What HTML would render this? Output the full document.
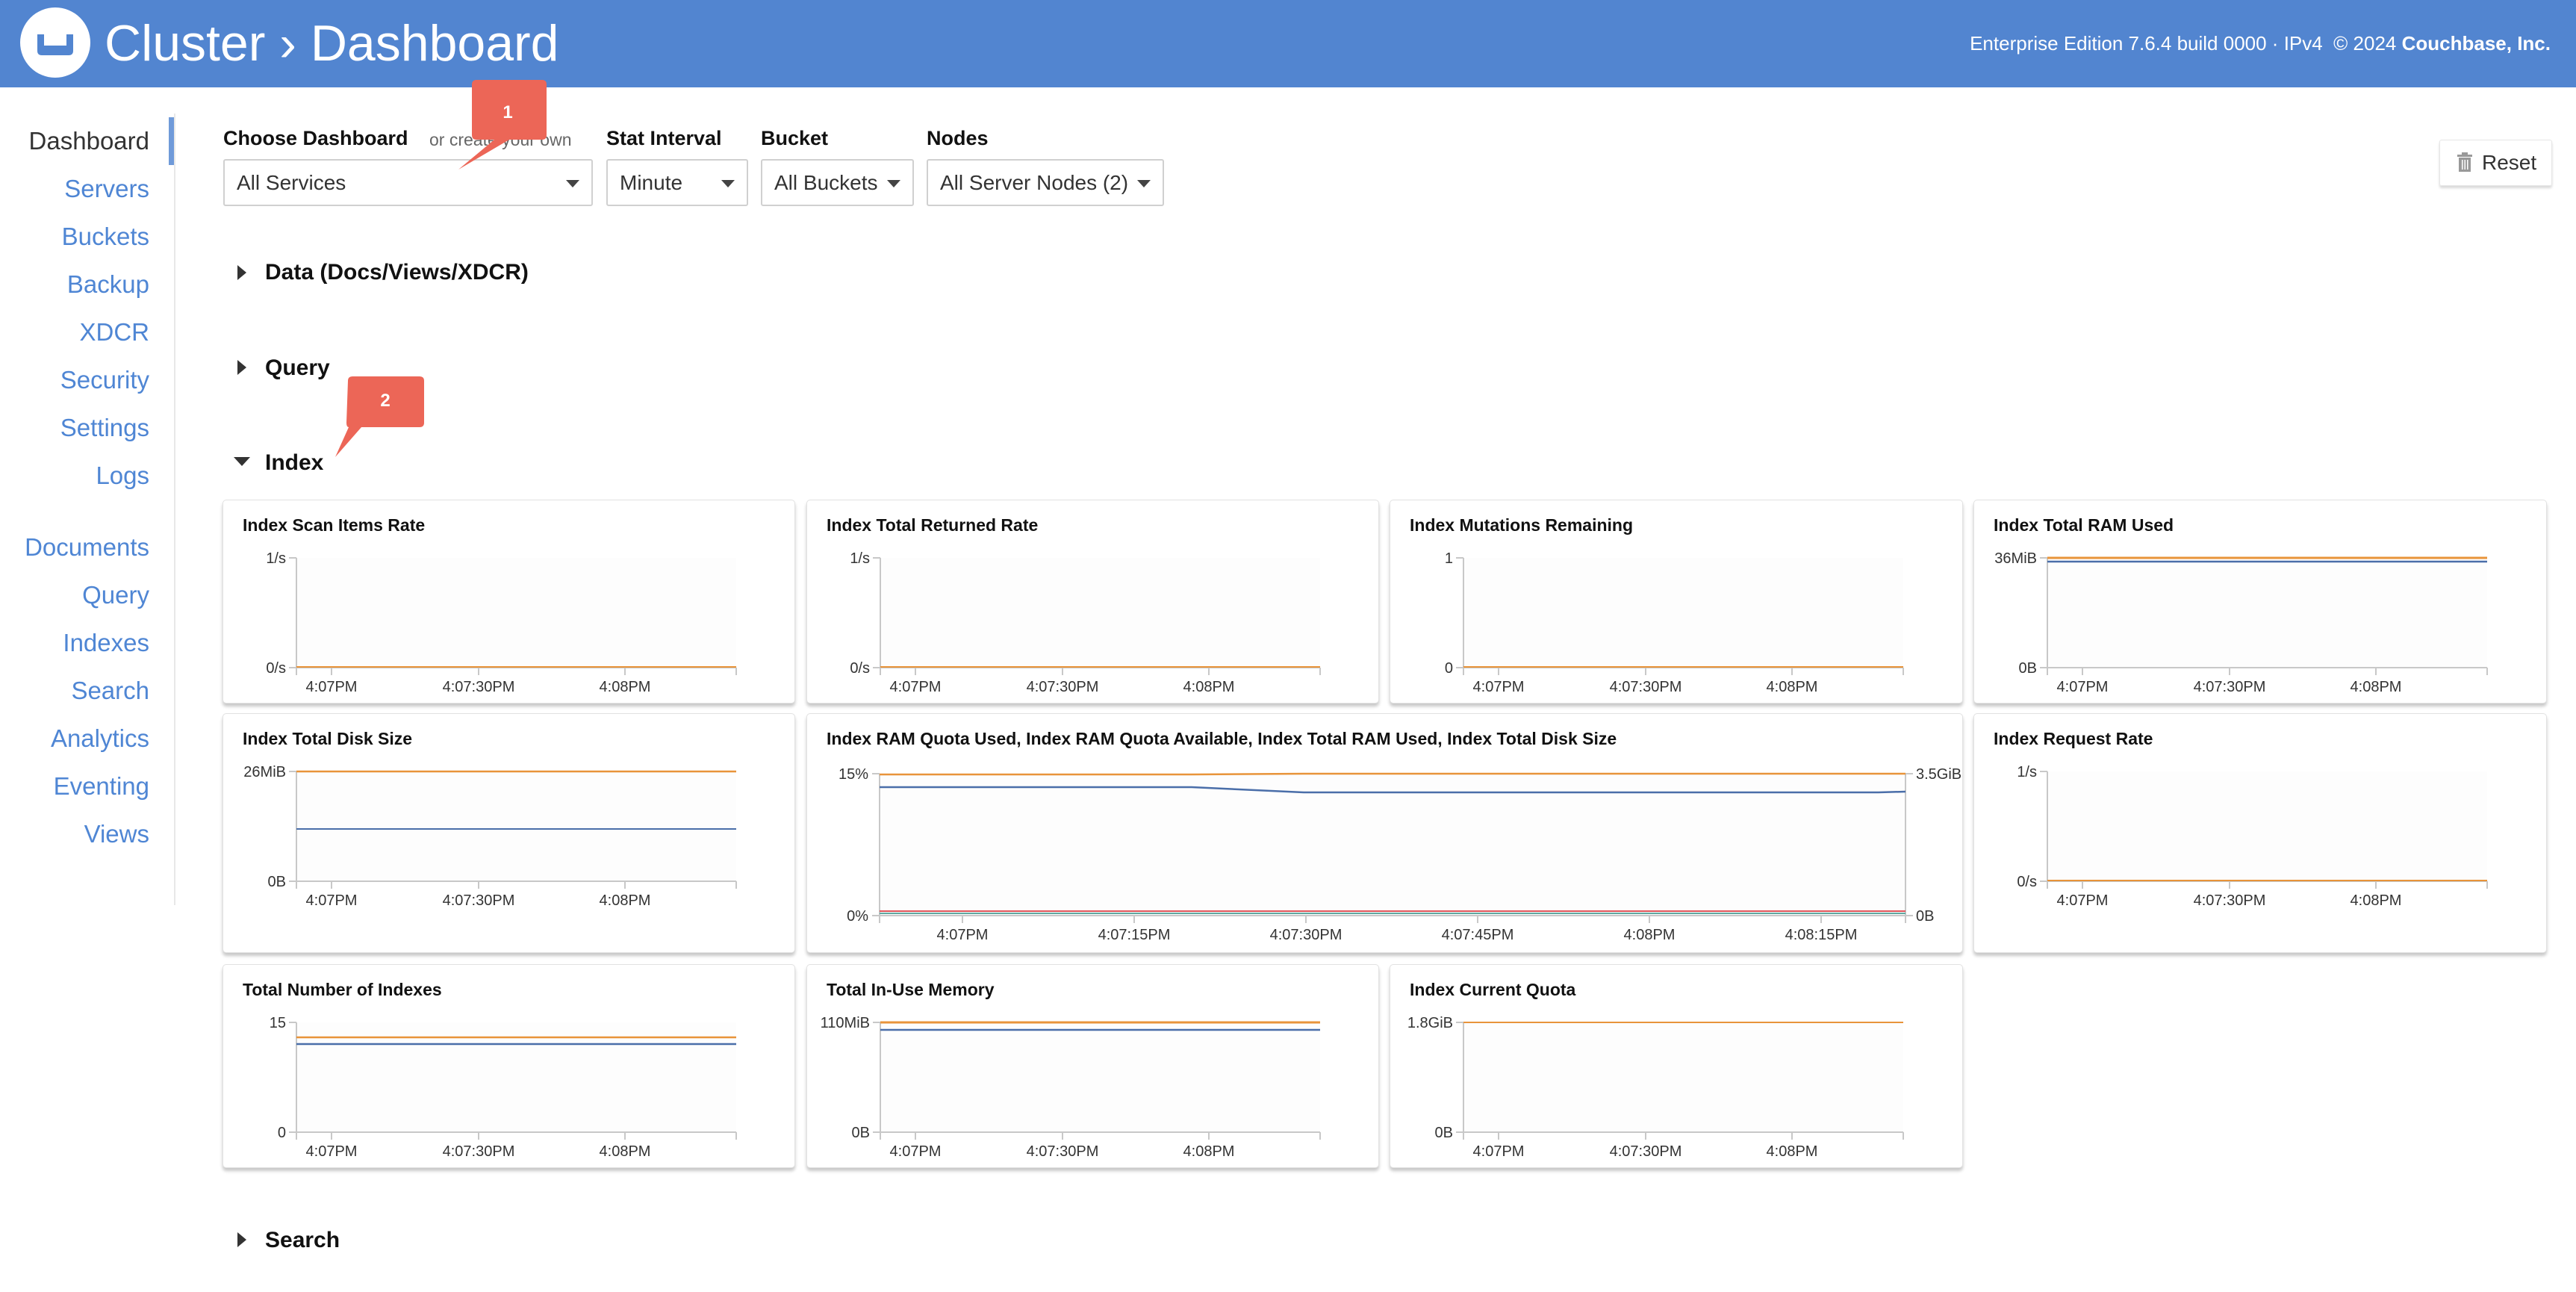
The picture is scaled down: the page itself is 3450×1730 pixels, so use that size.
<!DOCTYPE html>
<html><head><meta charset="utf-8"><style>
*{margin:0;padding:0;box-sizing:border-box}
body{width:3450px;height:1730px;background:#fff;position:relative;overflow:hidden;font-family:"Liberation Sans",sans-serif;color:#111}
.a{position:absolute;white-space:nowrap}
.hdr{left:0;top:0;width:3450px;height:117px;background:#5285d0}
.nav{right:3250px;font-size:33px;color:#4f86d4;height:50px;line-height:50px;text-align:right}
.lbl{font-size:27px;font-weight:bold;color:#111;top:167px;line-height:36px}
.sel{top:213px;height:63px;border:2px solid #d0d0d0;border-radius:3px;font-size:28px;color:#333;line-height:59px;padding-left:16px;background:#fff}
.sel:after{content:"";position:absolute;right:16px;top:26px;border-left:9px solid transparent;border-right:9px solid transparent;border-top:10px solid #444}
.sec{font-size:30px;font-weight:bold;color:#111;line-height:40px}
.tri{width:0;height:0;border-top:10px solid transparent;border-bottom:10px solid transparent;border-left:12px solid #333}
.card{position:absolute;background:#fff;border:1px solid #e2e2e2;border-radius:5px;box-shadow:0 4px 4px rgba(0,0,0,.22)}
.card svg{position:absolute;left:0;top:0}
svg text{font-family:"Liberation Sans",sans-serif}
.t{font-size:23px;font-weight:bold;fill:#111}
.ax{font-size:20px;fill:#333}
</style></head><body>
<div class="a hdr"></div>
<svg class="a" style="left:26px;top:9px" width="96" height="96"><circle cx="48" cy="48" r="47" fill="#fff"/><path d="M24 37 v22 q0 6 6 6 h36 q6 0 6-6 v-22 h-9 v15 h-30 v-15z" fill="#5285d0"/></svg>
<div class="a" style="left:140px;top:16px;font-size:68px;color:#fff;line-height:84px">Cluster › Dashboard</div>
<div class="a" style="right:34px;top:40px;font-size:26px;color:#fff;line-height:36px">Enterprise Edition 7.6.4 build 0000 · IPv4 &nbsp;© 2024 <b>Couchbase, Inc.</b></div>

<div class="a" style="left:233px;top:152px;width:2px;height:1060px;background:#e8e8e8"></div>
<div class="a" style="left:226px;top:157px;width:7px;height:64px;background:#6f9ad9"></div>
<div class="a nav" style="top:164px;color:#333">Dashboard</div>
<div class="a nav" style="top:228px">Servers</div>
<div class="a nav" style="top:292px">Buckets</div>
<div class="a nav" style="top:356px">Backup</div>
<div class="a nav" style="top:420px">XDCR</div>
<div class="a nav" style="top:484px">Security</div>
<div class="a nav" style="top:548px">Settings</div>
<div class="a nav" style="top:612px">Logs</div>
<div class="a nav" style="top:708px">Documents</div>
<div class="a nav" style="top:772px">Query</div>
<div class="a nav" style="top:836px">Indexes</div>
<div class="a nav" style="top:900px">Search</div>
<div class="a nav" style="top:964px">Analytics</div>
<div class="a nav" style="top:1028px">Eventing</div>
<div class="a nav" style="top:1092px">Views</div>

<div class="a lbl" style="left:299px">Choose Dashboard</div>
<div class="a" style="left:575px;top:170px;font-size:23px;color:#666;line-height:34px">or create your own</div>
<div class="a lbl" style="left:812px">Stat Interval</div>
<div class="a lbl" style="left:1019px">Bucket</div>
<div class="a lbl" style="left:1241px">Nodes</div>
<div class="a sel" style="left:299px;width:495px">All Services</div>
<div class="a sel" style="left:812px;width:190px">Minute</div>
<div class="a sel" style="left:1019px;width:205px">All Buckets</div>
<div class="a sel" style="left:1241px;width:318px">All Server Nodes (2)</div>

<div class="a" style="left:3267px;top:187px;width:151px;height:62px;border:1px solid #e6e6e6;border-radius:3px;box-shadow:0 3px 3px rgba(0,0,0,.15);font-size:28px;color:#333;line-height:60px;padding-left:56px">Reset</div>
<svg class="a" style="left:3291px;top:204px" width="20" height="26"><rect x="0" y="3" width="20" height="3" fill="#999"/><rect x="6" y="0" width="8" height="4" fill="#999"/><rect x="2" y="7" width="16" height="19" fill="#999"/><rect x="6" y="10" width="1.5" height="13" fill="#fff"/><rect x="9.5" y="10" width="1.5" height="13" fill="#fff"/><rect x="13" y="10" width="1.5" height="13" fill="#fff"/></svg>

<div class="a tri" style="left:318px;top:355px"></div>
<div class="a sec" style="left:355px;top:345px">Data (Docs/Views/XDCR)</div>
<div class="a tri" style="left:318px;top:482px"></div>
<div class="a sec" style="left:355px;top:473px">Query</div>
<div class="a" style="left:313px;top:612px;width:0;height:0;border-left:11px solid transparent;border-right:11px solid transparent;border-top:12px solid #333"></div>
<div class="a sec" style="left:355px;top:600px">Index</div>
<div class="a tri" style="left:318px;top:1650px"></div>
<div class="a sec" style="left:355px;top:1641px">Search</div>

<!-- callouts -->
<svg class="a" style="left:600px;top:105px" width="140" height="130"><path d="M32 8 q0-6 6-6 h88 q6 0 6 6 v68 q0 6-6 6 h-44 L14 122 L62 82 h-24 q-6 0-6-6z" fill="#ec6657"/><text x="80" y="53" font-size="24" fill="#fff" text-anchor="middle" font-weight="bold">1</text></svg>
<svg class="a" style="left:440px;top:500px" width="140" height="120"><path d="M26 10 q0-6 6-6 h90 q6 0 6 6 v56 q0 6-6 6 h-78 l-35 40 l18-40 q-3 0-3-6z" fill="#ec6657"/><text x="76" y="44" font-size="24" fill="#fff" text-anchor="middle" font-weight="bold">2</text></svg>

<!-- Row 1 -->
<div class="card" style="left:298px;top:669px;width:767px;height:273px"><svg width="767" height="273">
<text class="t" x="26" y="41">Index Scan Items Rate</text>
<rect x="98" y="77" width="589" height="147" fill="#fdfdfd"/>
<path d="M98 77V234M88 77h10M88 224h10M98 224H687M145 224v10M342 224v10M538 224v10M687 224v10" stroke="#c8c8c8" stroke-width="2" fill="none"/>
<text class="ax" x="84" y="84" text-anchor="end">1/s</text><text class="ax" x="84" y="231" text-anchor="end">0/s</text>
<path d="M98 223H687" stroke="#e8943a" stroke-width="2"/>
<text class="ax" x="145" y="256" text-anchor="middle">4:07PM</text><text class="ax" x="342" y="256" text-anchor="middle">4:07:30PM</text><text class="ax" x="538" y="256" text-anchor="middle">4:08PM</text>
</svg></div>
<div class="card" style="left:1080px;top:669px;width:767px;height:273px"><svg width="767" height="273">
<text class="t" x="26" y="41">Index Total Returned Rate</text>
<rect x="98" y="77" width="589" height="147" fill="#fdfdfd"/>
<path d="M98 77V234M88 77h10M88 224h10M98 224H687M145 224v10M342 224v10M538 224v10M687 224v10" stroke="#c8c8c8" stroke-width="2" fill="none"/>
<text class="ax" x="84" y="84" text-anchor="end">1/s</text><text class="ax" x="84" y="231" text-anchor="end">0/s</text>
<path d="M98 223H687" stroke="#e8943a" stroke-width="2"/>
<text class="ax" x="145" y="256" text-anchor="middle">4:07PM</text><text class="ax" x="342" y="256" text-anchor="middle">4:07:30PM</text><text class="ax" x="538" y="256" text-anchor="middle">4:08PM</text>
</svg></div>
<div class="card" style="left:1861px;top:669px;width:768px;height:273px"><svg width="768" height="273">
<text class="t" x="26" y="41">Index Mutations Remaining</text>
<rect x="98" y="77" width="589" height="147" fill="#fdfdfd"/>
<path d="M98 77V234M88 77h10M88 224h10M98 224H687M145 224v10M342 224v10M538 224v10M687 224v10" stroke="#c8c8c8" stroke-width="2" fill="none"/>
<text class="ax" x="84" y="84" text-anchor="end">1</text><text class="ax" x="84" y="231" text-anchor="end">0</text>
<path d="M98 223H687" stroke="#e8943a" stroke-width="2"/>
<text class="ax" x="145" y="256" text-anchor="middle">4:07PM</text><text class="ax" x="342" y="256" text-anchor="middle">4:07:30PM</text><text class="ax" x="538" y="256" text-anchor="middle">4:08PM</text>
</svg></div>
<div class="card" style="left:2643px;top:669px;width:768px;height:273px"><svg width="768" height="273">
<text class="t" x="26" y="41">Index Total RAM Used</text>
<rect x="98" y="77" width="589" height="147" fill="#fdfdfd"/>
<path d="M98 77V234M88 77h10M88 224h10M98 224H687M145 224v10M342 224v10M538 224v10M687 224v10" stroke="#c8c8c8" stroke-width="2" fill="none"/>
<text class="ax" x="84" y="84" text-anchor="end">36MiB</text><text class="ax" x="84" y="231" text-anchor="end">0B</text>
<path d="M98 77H687" stroke="#e8943a" stroke-width="3"/><path d="M98 82H687" stroke="#4a6ea9" stroke-width="2.5"/>
<text class="ax" x="145" y="256" text-anchor="middle">4:07PM</text><text class="ax" x="342" y="256" text-anchor="middle">4:07:30PM</text><text class="ax" x="538" y="256" text-anchor="middle">4:08PM</text>
</svg></div>

<!-- Row 2 -->
<div class="card" style="left:298px;top:955px;width:767px;height:321px"><svg width="767" height="321">
<text class="t" x="26" y="41">Index Total Disk Size</text>
<rect x="98" y="77" width="589" height="147" fill="#fdfdfd"/>
<path d="M98 77V234M88 77h10M88 224h10M98 224H687M145 224v10M342 224v10M538 224v10M687 224v10" stroke="#c8c8c8" stroke-width="2" fill="none"/>
<text class="ax" x="84" y="84" text-anchor="end">26MiB</text><text class="ax" x="84" y="231" text-anchor="end">0B</text>
<path d="M98 77H687" stroke="#e8943a" stroke-width="2.5"/><path d="M98 154H687" stroke="#4a6ea9" stroke-width="2"/>
<text class="ax" x="145" y="256" text-anchor="middle">4:07PM</text><text class="ax" x="342" y="256" text-anchor="middle">4:07:30PM</text><text class="ax" x="538" y="256" text-anchor="middle">4:08PM</text>
</svg></div>
<div class="card" style="left:1080px;top:955px;width:1549px;height:321px"><svg width="1549" height="321">
<text class="t" x="26" y="41">Index RAM Quota Used, Index RAM Quota Available, Index Total RAM Used, Index Total Disk Size</text>
<rect x="97" y="80" width="1374" height="190" fill="#fdfdfd"/>
<path d="M97 80V280M87 80h10M87 270h10M97 270H1471M1471 80V280M1471 80h10M1471 270h10M208 270v10M438 270v10M668 270v10M898 270v10M1128 270v10M1358 270v10" stroke="#c8c8c8" stroke-width="2" fill="none"/>
<text class="ax" x="82" y="87" text-anchor="end">15%</text><text class="ax" x="82" y="277" text-anchor="end">0%</text>
<text class="ax" x="1485" y="87">3.5GiB</text><text class="ax" x="1485" y="277">0B</text>
<path d="M97 81H515L665 80H1471" stroke="#e8943a" stroke-width="2.5" fill="none"/>
<path d="M97 98H515L665 105H1435L1471 104" stroke="#4a6ea9" stroke-width="2.5" fill="none"/>
<path d="M97 267H1471" stroke="#5fa8a0" stroke-width="2"/><path d="M97 264H1471" stroke="#e0555a" stroke-width="2"/>
<text class="ax" x="208" y="302" text-anchor="middle">4:07PM</text><text class="ax" x="438" y="302" text-anchor="middle">4:07:15PM</text><text class="ax" x="668" y="302" text-anchor="middle">4:07:30PM</text><text class="ax" x="898" y="302" text-anchor="middle">4:07:45PM</text><text class="ax" x="1128" y="302" text-anchor="middle">4:08PM</text><text class="ax" x="1358" y="302" text-anchor="middle">4:08:15PM</text>
</svg></div>
<div class="card" style="left:2643px;top:955px;width:768px;height:321px"><svg width="768" height="321">
<text class="t" x="26" y="41">Index Request Rate</text>
<rect x="98" y="77" width="589" height="147" fill="#fdfdfd"/>
<path d="M98 77V234M88 77h10M88 224h10M98 224H687M145 224v10M342 224v10M538 224v10M687 224v10" stroke="#c8c8c8" stroke-width="2" fill="none"/>
<text class="ax" x="84" y="84" text-anchor="end">1/s</text><text class="ax" x="84" y="231" text-anchor="end">0/s</text>
<path d="M98 223H687" stroke="#e8943a" stroke-width="2"/>
<text class="ax" x="145" y="256" text-anchor="middle">4:07PM</text><text class="ax" x="342" y="256" text-anchor="middle">4:07:30PM</text><text class="ax" x="538" y="256" text-anchor="middle">4:08PM</text>
</svg></div>

<!-- Row 3 -->
<div class="card" style="left:298px;top:1291px;width:767px;height:273px"><svg width="767" height="273">
<text class="t" x="26" y="41">Total Number of Indexes</text>
<rect x="98" y="77" width="589" height="147" fill="#fdfdfd"/>
<path d="M98 77V234M88 77h10M88 224h10M98 224H687M145 224v10M342 224v10M538 224v10M687 224v10" stroke="#c8c8c8" stroke-width="2" fill="none"/>
<text class="ax" x="84" y="84" text-anchor="end">15</text><text class="ax" x="84" y="231" text-anchor="end">0</text>
<path d="M98 97H687" stroke="#e8943a" stroke-width="2.5"/><path d="M98 106H687" stroke="#4a6ea9" stroke-width="2.5"/>
<text class="ax" x="145" y="256" text-anchor="middle">4:07PM</text><text class="ax" x="342" y="256" text-anchor="middle">4:07:30PM</text><text class="ax" x="538" y="256" text-anchor="middle">4:08PM</text>
</svg></div>
<div class="card" style="left:1080px;top:1291px;width:767px;height:273px"><svg width="767" height="273">
<text class="t" x="26" y="41">Total In-Use Memory</text>
<rect x="98" y="77" width="589" height="147" fill="#fdfdfd"/>
<path d="M98 77V234M88 77h10M88 224h10M98 224H687M145 224v10M342 224v10M538 224v10M687 224v10" stroke="#c8c8c8" stroke-width="2" fill="none"/>
<text class="ax" x="84" y="84" text-anchor="end">110MiB</text><text class="ax" x="84" y="231" text-anchor="end">0B</text>
<path d="M98 77H687" stroke="#e8943a" stroke-width="3"/><path d="M98 87H687" stroke="#4a6ea9" stroke-width="2.5"/>
<text class="ax" x="145" y="256" text-anchor="middle">4:07PM</text><text class="ax" x="342" y="256" text-anchor="middle">4:07:30PM</text><text class="ax" x="538" y="256" text-anchor="middle">4:08PM</text>
</svg></div>
<div class="card" style="left:1861px;top:1291px;width:768px;height:273px"><svg width="768" height="273">
<text class="t" x="26" y="41">Index Current Quota</text>
<rect x="98" y="77" width="589" height="147" fill="#fdfdfd"/>
<path d="M98 77V234M88 77h10M88 224h10M98 224H687M145 224v10M342 224v10M538 224v10M687 224v10" stroke="#c8c8c8" stroke-width="2" fill="none"/>
<text class="ax" x="84" y="84" text-anchor="end">1.8GiB</text><text class="ax" x="84" y="231" text-anchor="end">0B</text>
<path d="M98 77H687" stroke="#e8943a" stroke-width="2"/>
<text class="ax" x="145" y="256" text-anchor="middle">4:07PM</text><text class="ax" x="342" y="256" text-anchor="middle">4:07:30PM</text><text class="ax" x="538" y="256" text-anchor="middle">4:08PM</text>
</svg></div>
</body></html>
